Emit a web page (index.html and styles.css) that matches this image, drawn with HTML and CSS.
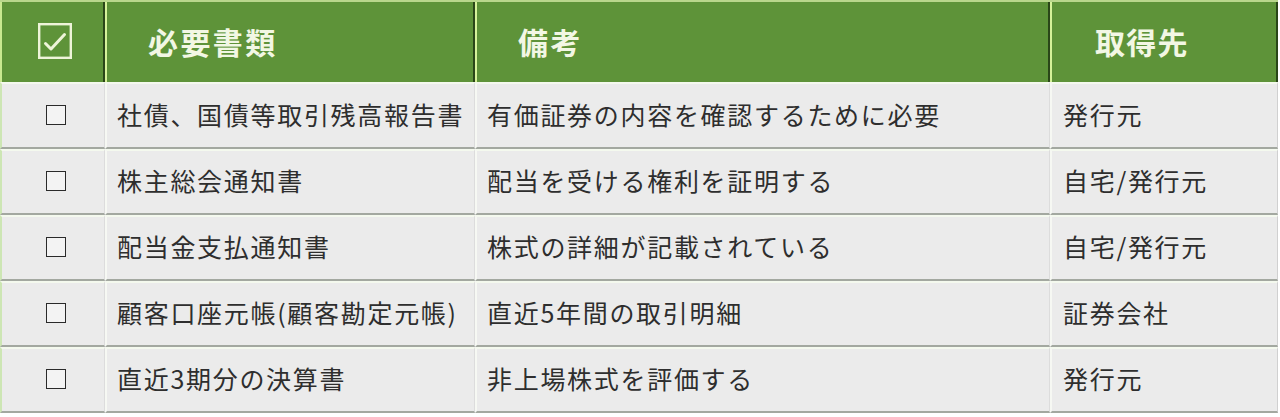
FILE: index.html
```html
<!DOCTYPE html>
<html lang="ja">
<head>
<meta charset="utf-8">
<title>必要書類</title>
<link rel="stylesheet" href="styles.css">
</head>
<body>
<div class="table">
  <div class="row head">
    <div class="cell c1">
      <span class="hcheck">
        <svg viewBox="0 0 34 36" width="34" height="36" aria-hidden="true">
          <rect x="1.2" y="1.2" width="31.6" height="33.6" fill="none" stroke="#eef4d9" stroke-width="2.4"/>
          <polyline points="7.5,20.5 13,26 26.5,11.5" fill="none" stroke="#eef4d9" stroke-width="3" stroke-linecap="round" stroke-linejoin="round"/>
        </svg>
      </span>
    </div>
    <div class="cell c2">必要書類</div>
    <div class="cell c3">備考</div>
    <div class="cell c4">取得先</div>
  </div>
  <div class="row body first">
    <div class="cell c1"><span class="box"></span></div>
    <div class="cell c2">社債、国債等取引残高報告書</div>
    <div class="cell c3">有価証券の内容を確認するために必要</div>
    <div class="cell c4">発行元</div>
  </div>
  <div class="row body">
    <div class="cell c1"><span class="box"></span></div>
    <div class="cell c2">株主総会通知書</div>
    <div class="cell c3">配当を受ける権利を証明する</div>
    <div class="cell c4">自宅/発行元</div>
  </div>
  <div class="row body">
    <div class="cell c1"><span class="box"></span></div>
    <div class="cell c2">配当金支払通知書</div>
    <div class="cell c3">株式の詳細が記載されている</div>
    <div class="cell c4">自宅/発行元</div>
  </div>
  <div class="row body">
    <div class="cell c1"><span class="box"></span></div>
    <div class="cell c2">顧客口座元帳(顧客勘定元帳)</div>
    <div class="cell c3">直近5年間の取引明細</div>
    <div class="cell c4">証券会社</div>
  </div>
  <div class="row body">
    <div class="cell c1"><span class="box"></span></div>
    <div class="cell c2">直近3期分の決算書</div>
    <div class="cell c3">非上場株式を評価する</div>
    <div class="cell c4">発行元</div>
  </div>
</div>
</body>
</html>
```

FILE: styles.css
```css
html, body {
  margin: 0;
  padding: 0;
  background: #ffffff;
}

body {
  font-family: "Noto Sans CJK JP", "Noto Sans", sans-serif;
  width: 1280px;
  height: 417px;
  overflow: hidden;
}

.table {
  width: 1278px;
  display: flex;
  flex-direction: column;
}

.row {
  display: grid;
  grid-template-columns: 105px 370px 575px 228px;
}

.cell {
  display: flex;
  align-items: center;
  box-sizing: border-box;
  white-space: nowrap;
}

/* header */
.head {
  height: 82px;
  border-top: 2px solid #b9d68c;
  background: #5e9339;
  box-sizing: border-box;
}

.head .cell {
  color: #f2f7e4;
  font-weight: 700;
  font-size: 30px;
  letter-spacing: 2.4px;
  border-left: 2px solid #d6f29a;
  border-right: 2px solid #2a4618;
  padding-left: 41px;
  padding-bottom: 2px;
}

.head .c1 {
  padding-left: 4px;
  justify-content: center;
  border-left-color: #c9e890;
}

.head .c4 {
  padding-left: 43px;
  letter-spacing: 1.2px;
}

.hcheck {
  display: block;
  width: 34px;
  height: 36px;
}

.hcheck svg {
  display: block;
}

/* body rows */
.body {
  height: 66px;
  background: #ebebeb;
}

.body.first {
  height: 67px;
}

.body .cell {
  color: #2e2e2e;
  font-size: 25px;
  letter-spacing: 1.7px;
  border-top: 2px solid #f4f9ee;
  border-bottom: 2px solid #a3a8a0;
  border-left: 2px solid #f6f8f3;
  border-right: 1px solid #dcdcdc;
  padding-left: 10px;
  padding-bottom: 4px;
}

.body .c1 {
  justify-content: center;
  padding-left: 5px;
  padding-bottom: 2px;
  border-left-color: #cde6b4;
}

.body .c4 {
  padding-left: 11px;
  border-right-color: #d0d0d0;
}

.box {
  display: block;
  width: 20px;
  height: 20px;
  border: 1.5px solid #2a2a2a;
  box-sizing: border-box;
  background: #f3f3f3;
}
```
